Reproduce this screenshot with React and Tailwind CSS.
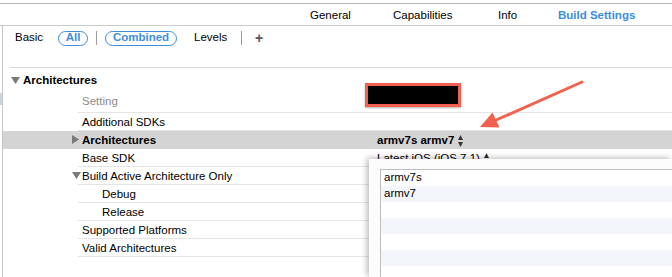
import React from 'react';

const DownTri = ({ className }) => (
  <svg width="9" height="7" viewBox="0 0 9 7" className={className}>
    <path d="M0 0H9L4.5 7Z" fill="#7a7a7a" />
  </svg>
);

const RightTri = ({ className }) => (
  <svg width="7" height="9" viewBox="0 0 7 9" className={className}>
    <path d="M0 0L7 4.5L0 9Z" fill="#7a7a7a" />
  </svg>
);

const UpDown = () => (
  <svg width="5" height="12" viewBox="0 0 5 12" className="ml-[4px]">
    <path d="M0 5L2.5 0L5 5Z" fill="#333" />
    <path d="M0 7L2.5 12L5 7Z" fill="#333" />
  </svg>
);

const Row = ({ label, value, indent = 0, bold, tri, gray, children, h = 'h-[18px]' }) => (
  <div className={gray ? 'bg-[#d4d4d4]' : ''}>
    <div
      className={`relative ml-[75px] ${h} pt-[2px] flex items-center border-b ${
        gray ? 'border-[#d4d4d4]' : 'border-[#e4e4e4]'
      }`}
    >
      {tri === 'right' && <RightTri className="absolute left-[-6px] top-[4px]" />}
      {tri === 'down' && <DownTri className="absolute left-[-6px] top-[5px]" />}
      <span className={`w-[299px] shrink-0 ${bold ? 'font-bold' : ''}`} style={{ paddingLeft: 4 + indent }}>
        {label}
      </span>
      {value}
      {children}
    </div>
  </div>
);

export default function App() {
  const stripes = ['bg-white', 'bg-[#f2f5fa]', 'bg-white', 'bg-[#f2f5fa]', 'bg-white', 'bg-[#f2f5fa]', 'bg-white'];
  return (
    <div className="relative w-[672px] h-[277px] overflow-hidden bg-white text-black text-[11.5px] font-['Liberation_Sans',Arial,sans-serif] flex flex-col">
      <div className="h-[3px] shrink-0" />
      {/* tabs */}
      <div className="h-[23px] shrink-0 pt-[2px] border-t border-b border-t-[#b3b3b3] border-b-[#cbcbcb] flex items-center pl-[310px]">
        <span className="w-[83px]">General</span>
        <span className="w-[105px]">Capabilities</span>
        <span className="w-[60px]">Info</span>
        <span className="font-bold text-[#3b8de0]">Build Settings</span>
      </div>

      <div className="flex flex-1">
        <div className="w-[2px] shrink-0 pt-[67px]">
          <div className="h-[12px] bg-[#c9d3e6]" />
        </div>
        <div className="flex-1 border-l border-[#c6c6c6] flex flex-col">
          {/* filter bar */}
          <div className="mt-[2px] h-[20px] flex items-center pl-[12px]">
            <span className="w-[43px]">Basic</span>
            <span className="h-[15px] w-[30px] rounded-full border border-[#3b8de0] text-[#3b8de0] font-bold flex items-center justify-center">
              All
            </span>
            <span className="mx-[8px] w-px h-[14px] bg-[#9c9c9c]" />
            <span className="h-[15px] w-[72px] rounded-full border border-[#3b8de0] text-[#3b8de0] font-bold flex items-center justify-center">
              Combined
            </span>
            <span className="ml-[17px] w-[47px]">Levels</span>
            <span className="w-px h-[14px] bg-[#9c9c9c]" />
            <span className="ml-[13px] text-[14px] font-bold text-[#555] leading-none">+</span>
          </div>

          <div className="mt-[19px] ml-[7px] border-t border-[#d6d6d6]" />
          <div className="h-[21px] pt-[4px] flex items-center pl-[8px] gap-[3px] font-bold">
            <DownTri />
            <span>Architectures</span>
          </div>

          <Row h="h-[24px]" label={<span className="text-[#8a8a8a]">Setting</span>}>
            <div className="absolute left-[287px] top-[-6px] w-[96px] h-[24px] bg-black border-[3px] border-[#f4604f] shadow-[0_1px_2px_rgba(0,0,0,0.3)]" />
          </Row>
          <Row label="Additional SDKs" />
          <Row
            gray
            bold
            tri="right"
            label="Architectures"
            value={
              <span className="flex items-center font-bold">
                armv7s armv7
                <UpDown />
              </span>
            }
          />
          <Row
            label="Base SDK"
            value={
              <span className="flex items-center">
                Latest iOS (iOS 7.1)
                <UpDown />
              </span>
            }
          />
          <Row tri="down" label="Build Active Architecture Only" />
          <Row indent={20} label="Debug" />
          <Row indent={20} label="Release" />
          <Row label="Supported Platforms" />
          <Row label="Valid Architectures" />
        </div>
      </div>

      {/* popup list */}
      <div className="absolute left-[369px] top-[159px] right-0 bottom-0 bg-[#fcfcfc] shadow-[-2px_-1px_6px_rgba(0,0,0,0.28)] pl-[11px] pt-[10px]">
        <div className="h-full border-l border-t border-[#bdbdbd] bg-white flex flex-col">
          {stripes.map((s, i) => (
            <div key={i} className={`h-[16px] shrink-0 flex items-center pl-[3px] ${s}`}>
              {i === 0 ? 'armv7s' : i === 1 ? 'armv7' : ''}
            </div>
          ))}
        </div>
      </div>

      {/* annotation arrow */}
      <svg className="absolute inset-0 pointer-events-none" width="672" height="277">
        <line x1="582" y1="82" x2="494" y2="121" stroke="#f2604e" strokeWidth="3" strokeLinecap="round" />
        <path d="M480 127L492.5 112.5L499.5 127.5Z" fill="#f2604e" />
      </svg>
    </div>
  );
}
